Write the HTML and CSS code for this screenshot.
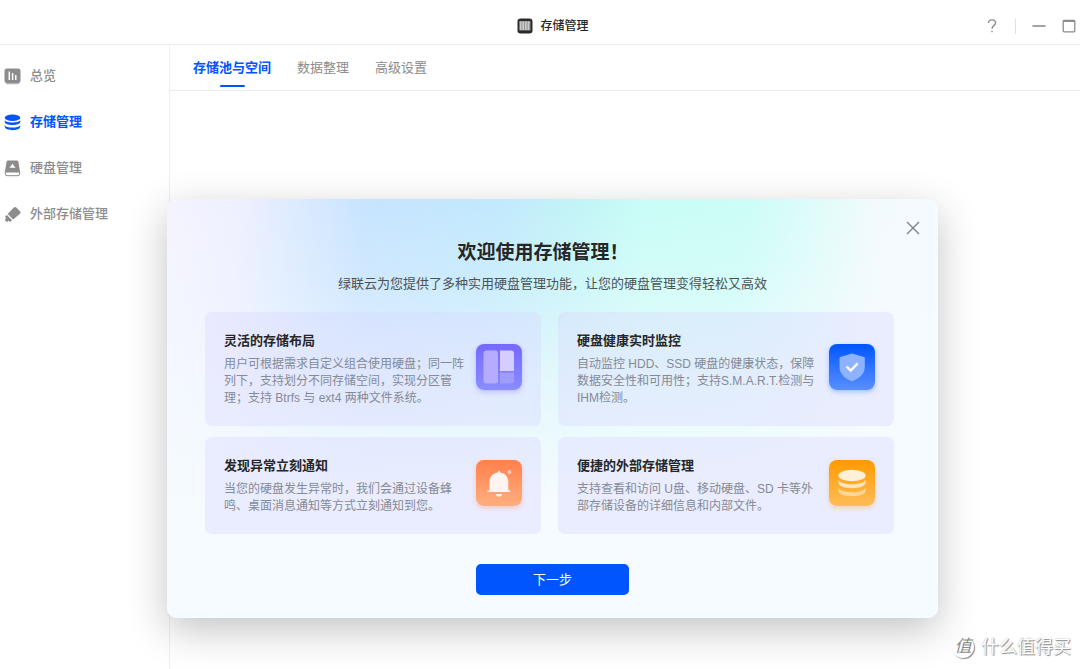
FILE: index.html
```html
<!DOCTYPE html>
<html lang="zh-CN">
<head>
<meta charset="utf-8">
<title>存储管理</title>
<link rel="stylesheet" href="styles.css">
</head>
<body>
<div class="app">
  <header class="titlebar">
    <div class="app-name">
      <svg width="16" height="16" viewBox="0 0 16 16" aria-hidden="true">
        <rect x="0.5" y="0.5" width="15" height="15" rx="3" fill="#2b2b2b"/>
        <rect x="2.5" y="3" width="11" height="9.5" rx="0.5" fill="#8f8f8f"/>
        <path d="M3.6 5v7M6.2 5v7M8.8 5v7M11.4 5v7" stroke="#c9c9c9" stroke-width="1.7"/>
        <path d="M2.5 4.2h11" stroke="#dedede" stroke-width="1" stroke-dasharray="2 .8"/>
      </svg>
      <h1>存储管理</h1>
    </div>
    <div class="window-tools">
      <button class="tool" aria-label="帮助"><svg width="14" height="16" viewBox="0 0 14 16" fill="none" stroke="#8c8c8c" stroke-width="1.4"><path d="M3.5 5C3.5 2.9 5 1.9 7 1.9s3.6 1.1 3.6 3C10.600 7.500 7 7.400 7 10.800"/><path d="M7 12.700v1.600"/></svg></button>
      <span class="divider"></span>
      <button class="tool" aria-label="最小化"><svg width="14" height="16" viewBox="0 0 14 16"><path d="M0.500 8h13" stroke="#8c8c8c" stroke-width="1.600"/></svg></button>
      <button class="tool" aria-label="最大化"><svg width="14" height="16" viewBox="0 0 14 16" fill="none" stroke="#8c8c8c"><rect x="1.200" y="2.400" width="11.600" height="11.400" rx="1" stroke-width="1.300"/><path d="M1 3h12" stroke-width="2"/></svg></button>
    </div>
  </header>

  <div class="body">
    <nav class="sidebar">
      <a href="#" class="nav-item">
        <svg width="17" height="17" viewBox="0 0 17 17"><path d="M2 14h13v1.300a1 1 0 0 1-1 1H3a1 1 0 0 1-1-1z" fill="#b5b5b5"/><rect x="0.500" y="0.500" width="16" height="14.500" rx="2.500" fill="#8c8c8c"/><path d="M5.300 3.500v8.500M8.600 5v7M11.800 7V12" stroke="#fff" stroke-width="1.500"/></svg>
        总览
      </a>
      <a href="#" class="nav-item active" aria-current="page">
        <svg width="17" height="17" viewBox="0 0 17 17"><ellipse cx="8.500" cy="3.700" rx="7.800" ry="3.200" fill="#0055ff"/><path d="M0.700 6.200C2 9.200 15 9.200 16.300 6.200v1.500c0 4.400-15.600 4.400-15.600 0zM0.700 11.200c1.300 3.200 14.300 3.200 15.600 0v1.400c0 4.800-15.600 4.800-15.600 0z" fill="#0055ff"/></svg>
        存储管理
      </a>
      <a href="#" class="nav-item">
        <svg width="17" height="17" viewBox="0 0 17 17"><path d="M4.200.5h8.600a1.700 1.700 0 0 1 1.600 1.300l1.700 10.200H.900l1.700-10.200A1.700 1.700 0 0 1 4.200.5z" fill="#8c8c8c"/><path d="M1.300 12h14.400v2a1.700 1.700 0 0 1-1.700 1.700H3A1.700 1.700 0 0 1 1.300 14z" fill="#fff" stroke="#8c8c8c" stroke-width="1"/><path d="M5.600 7.800a1.500 1.500 0 0 1 1.300-1.500L8.500 3.600l1.600 2.700a1.500 1.500 0 0 1 1.300 1.500z" fill="#fff"/></svg>
        硬盘管理
      </a>
      <a href="#" class="nav-item">
        <svg width="17" height="17" viewBox="0 0 17 17" fill="#8c8c8c"><path d="M9.800 1.400a2 2 0 0 1 2.500 0l3.700 3.800a2 2 0 0 1 0 2.500l-6.800 5.900L3.700 8z"/><path d="M2.900 8.900l5.200 5.300-1.700 1.500-2-1-1.300 1.500L.600 13.700 2 12.500l-.9-2z"/></svg>
        外部存储管理
      </a>
    </nav>

    <main class="content">
      <nav class="tabs">
        <a href="#" class="tab selected" aria-current="true">存储池与空间</a>
        <a href="#" class="tab">数据整理</a>
        <a href="#" class="tab">高级设置</a>
      </nav>
    </main>
  </div>

  <div class="overlay">
    <section class="dialog" role="dialog" aria-labelledby="welcome">
      <button class="close" aria-label="关闭"><svg width="14" height="14" viewBox="0 0 14 14"><path d="M1 1l12 12M13 1L1 13" stroke="#7d8486" stroke-width="1.400"/></svg></button>
      <h2 id="welcome">欢迎使用存储管理！</h2>
      <p class="lead">绿联云为您提供了多种实用硬盘管理功能，让您的硬盘管理变得轻松又高效</p>

      <div class="cards">
        <article class="card">
          <div class="card-text">
            <h3>灵活的存储布局</h3>
            <p>用户可根据需求自定义组合使用硬盘；同一阵列下，支持划分不同存储空间，实现分区管理；支持 Btrfs 与 ext4 两种文件系统。</p>
          </div>
          <div class="card-icon violet">
            <svg width="46" height="46" viewBox="0 0 46 46"><rect x="7.500" y="6.500" width="14.500" height="33" rx="3" fill="#b6acff"/><path d="M24 6.500h11a3 3 0 0 1 3 3V27H24z" fill="#d5cdff"/><path d="M24 28.500h14v8a3 3 0 0 1-3 3H24z" fill="#9f9bff"/></svg>
          </div>
        </article>
        <article class="card">
          <div class="card-text">
            <h3>硬盘健康实时监控</h3>
            <p>自动监控 HDD、SSD 硬盘的健康状态，保障数据安全性和可用性；支持S.M.A.R.T.检测与IHM检测。</p>
          </div>
          <div class="card-icon blue">
            <svg width="46" height="46" viewBox="0 0 46 46"><path d="M23 9.500l12 3.500q.800.300.800 1.200V23c0 7-5.500 11.500-12.800 14.300C15.700 34.500 10.500 30 10.500 23v-8.800q0-.900.800-1.200z" fill="#8db2ff"/><path d="M17.500 22.500l4.200 4 7-7.200" fill="none" stroke="#fff" stroke-width="2.400"/></svg>
          </div>
        </article>
        <article class="card">
          <div class="card-text">
            <h3>发现异常立刻通知</h3>
            <p>当您的硬盘发生异常时，我们会通过设备蜂鸣、桌面消息通知等方式立刻通知到您。</p>
          </div>
          <div class="card-icon coral">
            <svg width="46" height="46" viewBox="0 0 46 46" fill="#fff4ef"><path d="M22 11.800a1 1 0 0 1 2 0v.8c5 .6 8.300 4.200 8.300 9.400v8.500h2v1.600H11.500v-1.600h2V22c0-5.200 3.500-8.800 8.500-9.400z"/><path d="M20 34h6a3 2.600 0 0 1-6 0z"/><circle cx="33.500" cy="12" r="1.900" fill="#ffc8ae"/></svg>
          </div>
        </article>
        <article class="card">
          <div class="card-text">
            <h3>便捷的外部存储管理</h3>
            <p>支持查看和访问 U盘、移动硬盘、SD 卡等外部存储设备的详细信息和内部文件。</p>
          </div>
          <div class="card-icon amber">
            <svg width="46" height="46" viewBox="0 0 46 46"><ellipse cx="23" cy="15.500" rx="13.600" ry="5.700" fill="#fff0d9"/><path d="M9.400 19.800c2 6 25.200 6 27.200 0v2.800c0 7.600-27.200 7.600-27.200 0z" fill="#ffe5bb"/><path d="M9.400 27.800c2 6 25.200 6 27.200 0v2.800c0 7.600-27.200 7.600-27.200 0z" fill="#ffd999"/></svg>
          </div>
        </article>
      </div>

      <button class="next">下一步</button>
    </section>
  </div>

  <div class="watermark"><span class="seal">值</span>什么值得买</div>
</div>
</body>
</html>
```

FILE: styles.css
```css
* { box-sizing: border-box; }

body {
  margin: 0;
  background: #fff;
  color: #262626;
  font: 13px/20px "Liberation Sans", "Noto Sans CJK SC", sans-serif;
}

h1, h2, h3, p { margin: 0; }
a { color: inherit; text-decoration: none; }
button { border: 0; padding: 0; background: none; font: inherit; cursor: pointer; }
svg { display: block; flex: none; }

.app {
  position: relative;
  display: flex;
  flex-direction: column;
  min-height: 100vh;
  overflow: hidden;
}

/* Title bar */
.titlebar {
  display: grid;
  grid-template-columns: 1fr auto 1fr;
  align-items: center;
  height: 45px;
  padding: 8px 4px 0 30px;
  border-bottom: 1px solid #ededed;
}
.app-name { grid-column: 2; display: flex; align-items: center; gap: 7px; }
.app-name h1 { font-size: 12px; font-weight: 500; line-height: 20px; }
.window-tools { display: flex; align-items: center; justify-content: flex-end; gap: 16px; }
.divider { width: 1px; height: 15px; background: #e0e0e0; }

/* Navigation */
.body { flex: 1; display: flex; }
.sidebar { width: 170px; padding-top: 8px; border-right: 1px solid #efefef; }
.nav-item {
  display: flex;
  align-items: center;
  gap: 9px;
  height: 46px;
  padding-left: 4px;
  color: #8c8c8c;
  font-weight: 500;
}
.active, .selected { color: #0055ff; font-weight: 700; }

.content { flex: 1; }
.tabs {
  display: flex;
  gap: 26px;
  height: 46px;
  padding-left: 23px;
  border-bottom: 1px solid #ededed;
}
.tab {
  display: flex;
  flex-direction: column;
  align-items: center;
  padding-top: 13px;
}
.tab:not(.selected) { color: #8c8c8c; }
.selected::after {
  content: "";
  width: 25px;
  height: 2px;
  margin-top: 7px;
  border-radius: 1px;
  background: #0055ff;
}

/* Welcome dialog */
.overlay {
  position: absolute;
  inset: 148px 0 0 25px;
  display: flex;
  align-items: center;
  justify-content: center;
}
.dialog {
  position: relative;
  display: flex;
  flex-direction: column;
  align-items: center;
  width: 100%;
  max-width: 771px;
  padding: 40px 38px 23px;
  border-radius: 10px;
  background:
    linear-gradient(177deg, rgba(245, 251, 255, 0) 0%, rgba(245, 251, 255, .22) 20%, rgba(245, 251, 255, .7) 46%, #f5fbff 70%),
    linear-gradient(94deg, #f4f4ff 0%, #eef0ff 9%, #c6e3ff 25%, #bfe8fd 41%, #c0f3f7 51%, #c6fdf5 60%, #c8fdf5 72%, #dafcf9 80%, #f3fafe 89%, #f5fbff 100%);
  box-shadow: 0 12px 40px rgba(0, 0, 0, .24);
}
.close { position: absolute; top: 22px; right: 18px; }
.dialog h2 { padding-right: 19px; font-size: 19px; line-height: 28px; }
.lead { margin-top: 7px; color: #4c5355; }

.cards {
  display: grid;
  grid-template-columns: 1fr 1fr;
  gap: 11px 17px;
  width: 100%;
  margin-top: 18px;
  padding-right: 6px;
}
.card {
  display: flex;
  align-items: center;
  justify-content: space-between;
  padding: 14px 19px 19px;
  border-radius: 7px;
  background: rgba(216, 214, 255, .36);
}
.card-text { max-width: 242px; }
.card h3 { font-size: 13px; line-height: 30px; }
.card p { color: #858a95; font-size: 12px; line-height: 17px; }
.card-icon { border-radius: 8px; }
.violet { background: linear-gradient(#7668ff, #8a8dff); box-shadow: 0 2px 5px rgba(125, 120, 255, .4); }
.blue { background: linear-gradient(#0055ff, #5a8fff); box-shadow: 0 2px 5px rgba(60, 120, 255, .4); }
.coral { background: linear-gradient(#ff804c, #ffae80); box-shadow: 0 2px 5px rgba(255, 150, 100, .4); }
.amber { background: linear-gradient(#ff9a00, #ffbd58); box-shadow: 0 2px 5px rgba(255, 170, 60, .4); }

.next {
  width: 153px;
  height: 31px;
  margin-top: 30px;
  border-radius: 5px;
  background: #0055ff;
  color: #fff;
}

/* Corner mark */
.watermark {
  position: absolute;
  right: 9px;
  bottom: 10px;
  display: flex;
  align-items: center;
  gap: 7px;
  color: #fff;
  font-size: 18px;
  line-height: 24px;
  text-shadow: 1px 1px 1px #8a8a8a, 0 0 1px #a0a0a0;
}
.seal {
  width: 22px;
  height: 22px;
  border-radius: 50%;
  box-shadow: 1px 1px 1px #8a8a8a;
  color: #8a8a8a;
  font-size: 17px;
  font-style: italic;
  line-height: 22px;
  text-align: center;
  text-shadow: none;
}
```
